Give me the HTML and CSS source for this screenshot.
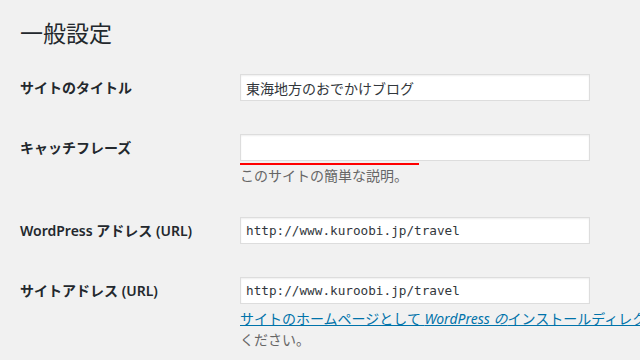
FILE: index.html
```html
<!DOCTYPE html>
<html lang="ja">
<head>
  <meta charset="UTF-8" />
  <meta name="viewport" content="width=device-width, initial-scale=1.0"/>
  <title>一般設定</title>
  <link rel="stylesheet" href="styles.css">
</head>
<body>
  <div class="wrap">
    <h1>一般設定</h1>

    <table class="form-table">
      <tbody>
        <tr>
          <th><label for="blogname">サイトのタイトル</label></th>
          <td><input id="blogname" type="text" class="regular-text" value="東海地方のおでかけブログ"></td>
        </tr>
        <tr>
          <th><label for="blogdescription">キャッチフレーズ</label></th>
          <td>
            <input id="blogdescription" type="text" class="regular-text" value="">
            <p class="description marked">このサイトの簡単な説明。</p>
          </td>
        </tr>
        <tr>
          <th><label for="siteurl">WordPress アドレス (URL)</label></th>
          <td><input id="siteurl" type="url" class="regular-text code" value="http://www.kuroobi.jp/travel"></td>
        </tr>
        <tr>
          <th><label for="home">サイトアドレス (URL)</label></th>
          <td>
            <input id="home" type="url" class="regular-text code" value="http://www.kuroobi.jp/travel">
            <p class="description"><a href="#">サイトのホームページとして <em>WordPress の</em>インストールディレクトリとは異なる場所を設定する場合は、ここに入力して</a><br>ください。</p>
          </td>
        </tr>
      </tbody>
    </table>
  </div>
</body>
</html>
```

FILE: styles.css
```css
html, body {
  overflow: hidden;
}
body {
  margin: 0;
  background: #f1f1f1;
  color: #444;
  font-family: "Noto Sans", "Noto Sans CJK JP", sans-serif;
  font-size: 14px;
}
.wrap {
  width: 1100px;
  padding: 0 20px;
}
h1 {
  margin: 0;
  padding: 19px 0 0;
  font-size: 23px;
  font-weight: 400;
  line-height: 29px;
  color: #23282d;
}

.form-table {
  width: 100%;
  margin-top: 10px;
  border-collapse: collapse;
  table-layout: fixed;
}
.form-table th {
  width: 200px;
  padding: 21px 10px 19px 0;
  text-align: left;
  vertical-align: top;
  white-space: nowrap;
  font-weight: 600;
  line-height: 1.3;
  color: #23282d;
}
.form-table td {
  padding: 15px 10px;
  vertical-align: top;
  line-height: 1.3;
}

.regular-text {
  display: block;
  box-sizing: border-box;
  width: 350px;
  height: 27px;
  margin: 1px 0 2px;
  padding: 3px 5px;
  border: 1px solid #ddd;
  background: #fff;
  box-shadow: inset 0 1px 2px rgba(0,0,0,0.07);
  color: #32373c;
  font-family: "Noto Sans", "Noto Sans CJK JP", sans-serif;
  font-size: 14px;
  outline: none;
}
.regular-text.code {
  font-family: "DejaVu Sans Mono", monospace;
  font-size: 12.7px;
}

.description {
  position: relative;
  margin: 4px 0 0;
  line-height: 21px;
  color: #666;
  white-space: nowrap;
}
.description a {
  color: #0073aa;
}
.description.marked::before {
  content: "";
  position: absolute;
  left: 0;
  top: -2px;
  width: 179px;
  height: 2px;
  background: #f00;
}
```
